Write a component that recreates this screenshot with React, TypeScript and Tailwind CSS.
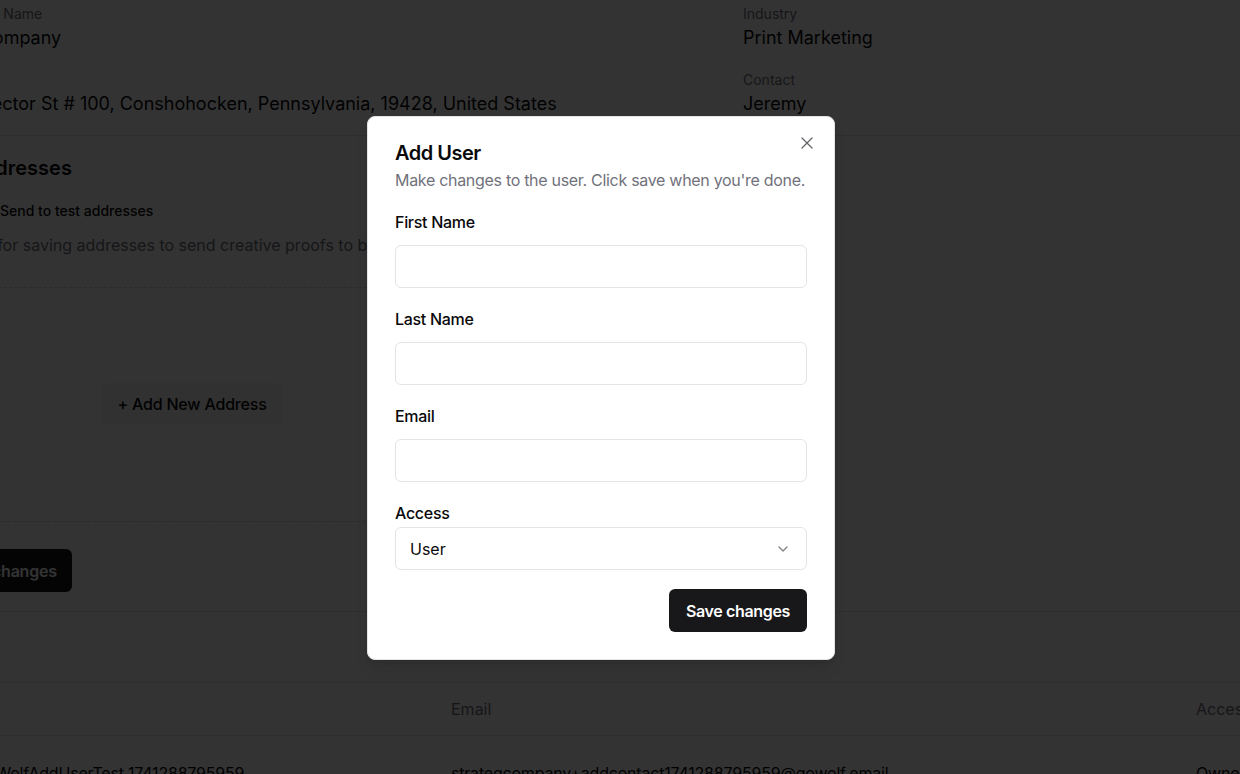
import { X, ChevronDown } from 'lucide-react';

const Field = ({ label, value }: { label: string; value: string }) => (
  <div className="flex flex-col">
    <span className="text-sm leading-5 text-zinc-500">{label}</span>
    <span className="text-lg leading-7 text-zinc-950">{value}</span>
  </div>
);

const FormField = ({ label }: { label: string }) => (
  <div className="flex flex-col gap-[11px]">
    <label className="text-base leading-6 font-medium tracking-[-0.3px] text-zinc-950">{label}</label>
    <input className="h-[43px] w-full rounded-md border border-zinc-200 bg-white px-3.5 text-base outline-none" />
  </div>
);

const App = () => {
  return (
    <div className="relative h-[774px] w-full overflow-hidden bg-white font-['Inter',sans-serif]">
      {/* page behind the dialog, scrolled a little to the right */}
      <div className="-ml-[64px] w-[1500px] flex flex-col">
        <section className="grid grid-cols-[807px_1fr] border-b border-zinc-200 pt-[4px] pb-[17px]">
          <div className="flex flex-col gap-[18px]">
            <Field label="Company Name" value="Wolf Company" />
            <Field label="Address" value="1100 Hector St # 100, Conshohocken, Pennsylvania, 19428, United States" />
          </div>
          <div className="flex flex-col gap-[18px]">
            <Field label="Industry" value="Print Marketing" />
            <Field label="Contact" value="Jeremy" />
          </div>
        </section>

        <section className="flex flex-col border-b border-zinc-200 pt-[18px] pb-[19px]">
          <h2 className="-ml-[14px] text-xl leading-7 font-semibold text-zinc-950">Test Addresses</h2>
          <div className="mt-[19px] flex items-center gap-[20px]">
            <span className="h-5 w-[44px] rounded-full bg-zinc-200" />
            <span className="text-sm leading-5 font-medium text-zinc-950">Send to test addresses</span>
          </div>
          <p className="mt-[12px] text-base leading-6 text-zinc-500">
            A place for saving addresses to send creative proofs to before they go out.
          </p>
          <div className="mt-[30px] flex h-[235px] w-[512px] items-center justify-center rounded-lg border border-dashed border-zinc-300">
            <button className="-mt-[2px] h-[41px] w-[182px] rounded-md bg-zinc-100 text-base font-medium tracking-[-0.2px] text-zinc-950">
              + Add New Address
            </button>
          </div>
          <div className="mt-[27px]">
            <button className="h-[43px] rounded-md bg-zinc-900 px-[15px] text-base font-semibold tracking-[-0.2px] text-white">
              Save changes
            </button>
          </div>
        </section>

        <section className="flex h-[71px] items-center border-b border-zinc-200">
          <h2 className="text-lg font-semibold text-zinc-950">Users</h2>
        </section>

        <div className="grid grid-cols-[515px_745px_1fr] border-b border-zinc-200 h-[53px] items-center text-base text-zinc-500">
          <span>Name</span>
          <span>Email</span>
          <span>Access</span>
        </div>
        <div className="grid grid-cols-[515px_745px_1fr] pt-[25px] pb-4 text-base leading-6 tracking-[-0.2px] text-zinc-950">
          <span>Jeremy WolfAddUserTest 1741288795959</span>
          <span>strategcompany+addcontact1741288795959@gowolf.email</span>
          <span>Owner</span>
        </div>
      </div>

      {/* overlay */}
      <div className="absolute inset-0 bg-black/80" />

      {/* dialog */}
      <div className="absolute left-[367px] top-[116px] w-[468px] rounded-lg border border-zinc-200 bg-white px-[27px] pt-[22px] pb-[27px] shadow-lg">
        <button className="absolute right-[17px] top-[16px] text-zinc-700 opacity-80">
          <X size={20} strokeWidth={1.5} />
        </button>
        <h2 className="text-xl leading-7 font-semibold tracking-tight text-zinc-950">Add User</h2>
        <p className="mt-[1px] whitespace-nowrap text-base leading-6 tracking-[-0.3px] text-zinc-500">
          Make changes to the user. Click save when you're done.
        </p>

        <div className="mt-[18px] flex flex-col gap-[19px]">
          <FormField label="First Name" />
          <FormField label="Last Name" />
          <FormField label="Email" />
          <div className="flex flex-col gap-[2px]">
            <label className="text-base leading-6 font-medium tracking-[-0.3px] text-zinc-950">Access</label>
            <div className="flex h-[43px] items-center justify-between rounded-md border border-zinc-200 bg-white pl-3.5 pr-[15px]">
              <span className="text-base text-zinc-950">User</span>
              <ChevronDown size={16} className="text-zinc-950 opacity-50" />
            </div>
          </div>
        </div>

        <div className="mt-[19px] flex justify-end">
          <button className="h-[43px] rounded-md bg-zinc-900 px-[17px] text-base font-semibold tracking-[-0.35px] text-white">
            Save changes
          </button>
        </div>
      </div>
    </div>
  );
};

export default App;
